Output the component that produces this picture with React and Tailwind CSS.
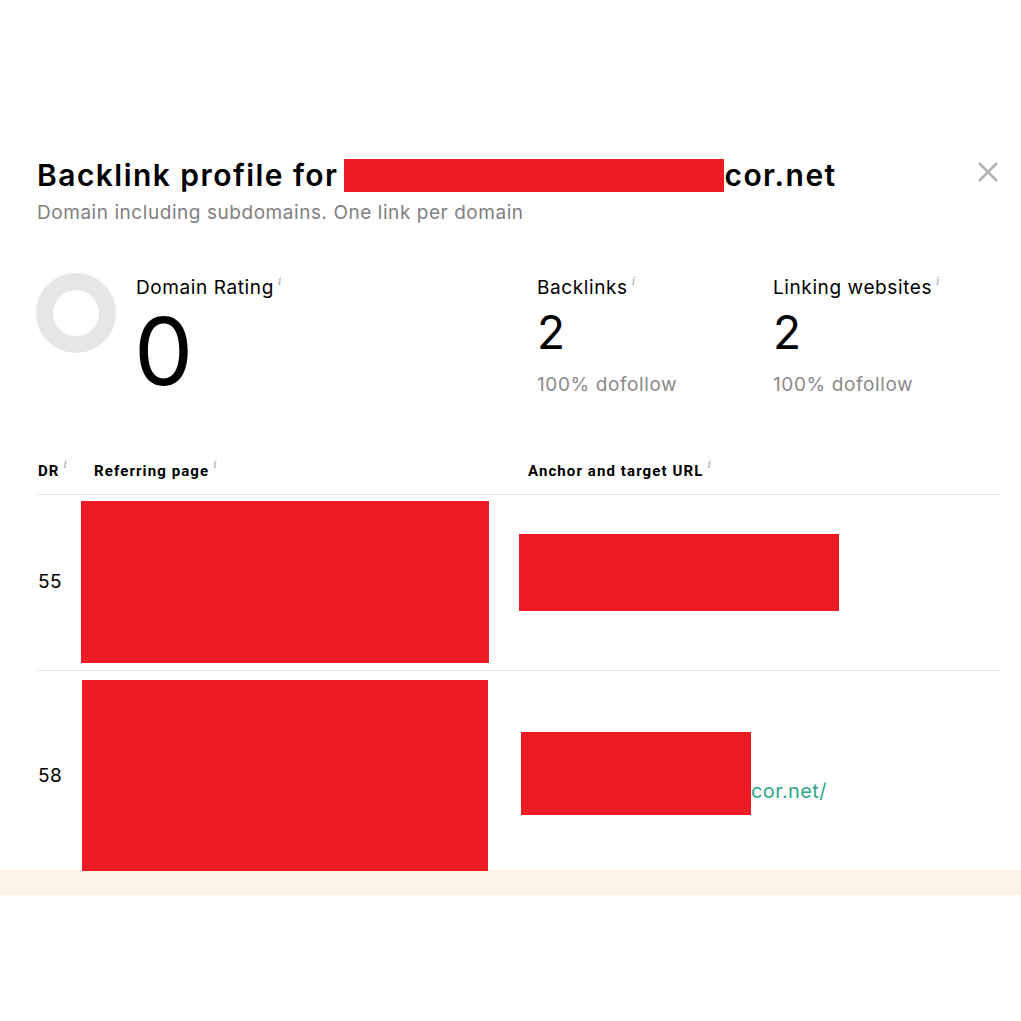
import React from 'react';

const Info = () => (
    <sup className="ml-[4px] text-[11px] italic text-gray-400 font-['DejaVu_Serif',serif] font-normal align-super relative top-[-2px] tracking-normal">i</sup>
);

const Redact = ({ className }) => <div className={`bg-[#ed1c24] shrink-0 ${className}`} />;

const Stat = ({ label, value, sub }) => (
    <div className="flex flex-col">
        <div className="text-[19px] leading-[24px] text-black tracking-[0.6px]">
            {label}
            <Info />
        </div>
        <div className="text-[46px] leading-[50px] mt-[7px] text-black">{value}</div>
        <div className="text-[19px] leading-[24px] mt-[16px] text-[#8a8a8a] tracking-[0.6px]">{sub}</div>
    </div>
);

const App = () => {
    return (
        <div className="min-h-screen bg-white font-['Inter',sans-serif] text-black">
            <div className="pt-[155px] px-[37px] pr-[23px]">
                <div className="flex items-start justify-between">
                    <h2 className="flex items-center text-[30px] leading-[40px] font-semibold tracking-[1.45px]">
                        Backlink profile for
                        <Redact className="w-[380px] h-[33px] ml-[6px]" />
                        cor.net
                    </h2>
                    <button className="mt-[7px]">
                        <svg width="20" height="20" viewBox="0 0 20 20" fill="none" stroke="#b3b3b3" strokeWidth="2.6">
                            <path d="M1 1L19 19M19 1L1 19" />
                        </svg>
                    </button>
                </div>
                <p className="mt-[6px] text-[19px] leading-[24px] text-[#808080] tracking-[0.55px]">
                    Domain including subdomains. One link per domain
                </p>

                <div className="flex mt-[51px]">
                    <div className="flex w-[500px]">
                        <svg width="82" height="82" viewBox="0 0 82 82" className="-ml-[2px] -mt-[4px]">
                            <circle cx="41" cy="41" r="31.5" fill="none" stroke="#e6e6e6" strokeWidth="17" />
                        </svg>
                        <div className="ml-[19px] flex flex-col">
                            <div className="text-[19px] leading-[24px] tracking-[0.6px]">
                                Domain Rating
                                <Info />
                            </div>
                            <div className="text-[94px] leading-[96px] mt-[3px] -ml-[2px]">0</div>
                        </div>
                    </div>
                    <div className="w-[236px]">
                        <Stat label="Backlinks" value="2" sub="100% dofollow" />
                    </div>
                    <Stat label="Linking websites" value="2" sub="100% dofollow" />
                </div>

                <div className="mt-[54px] w-[963px]">
                    <div className="flex items-center h-[42px] border-b border-[#e5e5e5] text-[15px] font-bold font-['Roboto',sans-serif] tracking-[1.1px] pb-[4px]">
                        <div className="w-[57px] pl-[1px]">DR<Info /></div>
                        <div className="w-[434px]">Referring page<Info /></div>
                        <div>Anchor and target URL<Info /></div>
                    </div>

                    <div className="flex h-[176px] border-b border-[#e5e5e5]">
                        <div className="w-[57px] self-center text-[19px] pl-[1px] tracking-[0.5px]">55</div>
                        <div className="w-[434px]">
                            <Redact className="w-[408px] h-[162px] mt-[6px] -ml-[13px]" />
                        </div>
                        <div>
                            <Redact className="w-[320px] h-[77px] mt-[39px] -ml-[9px]" />
                        </div>
                    </div>

                    <div className="flex h-[199px]">
                        <div className="w-[57px] self-center text-[19px] pl-[1px] mt-[12px] tracking-[0.5px]">58</div>
                        <div className="w-[434px]">
                            <Redact className="w-[406px] h-[191px] mt-[9px] -ml-[12px]" />
                        </div>
                        <div className="flex items-end mt-[61px] h-[83px] -ml-[7px]">
                            <Redact className="w-[230px] h-[83px]" />
                            <span className="text-[20px] leading-[24px] mb-[12px] text-[#2ea58a] tracking-[0.4px]">cor.net/</span>
                        </div>
                    </div>
                </div>
            </div>
            <div className="h-[25px] bg-[#fdf3e7]" />
        </div>
    );
};

export default App;
